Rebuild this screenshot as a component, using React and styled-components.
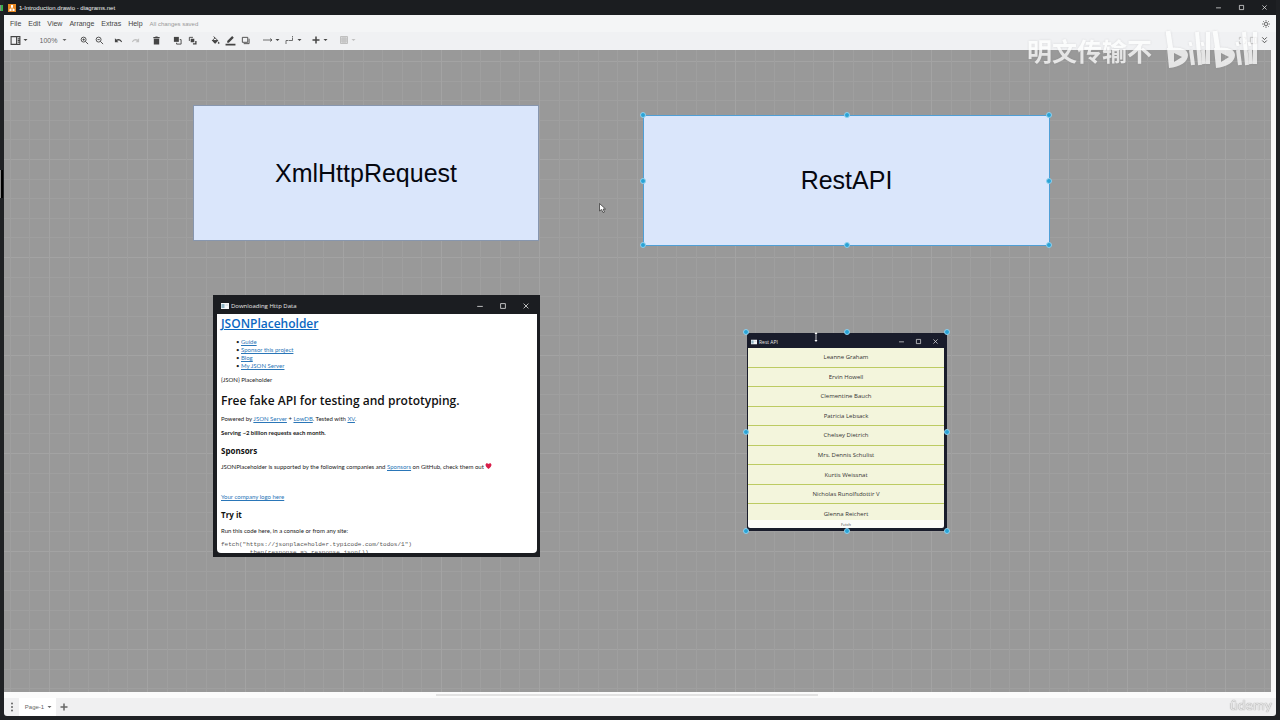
import styled, { createGlobalStyle, css } from "styled-components";

const menus = ["File", "Edit", "View", "Arrange", "Extras", "Help"];

const users = [
  "Leanne Graham",
  "Ervin Howell",
  "Clementine Bauch",
  "Patricia Lebsack",
  "Chelsey Dietrich",
  "Mrs. Dennis Schulist",
  "Kurtis Weissnat",
  "Nicholas Runolfsdottir V",
  "Glenna Reichert",
];

const handles = ["nw", "n", "ne", "w", "e", "sw", "s", "se"];

const Icon = ({ size = 10, children, ...rest }) => (
  <svg
    width={size}
    height={size}
    viewBox="0 0 20 20"
    fill="none"
    stroke="currentColor"
    strokeWidth={2}
    aria-hidden="true"
    {...rest}
  >
    {children}
  </svg>
);

const Caret = () => (
  <svg width="5" height="4" viewBox="0 0 10 8" fill="currentColor" aria-hidden="true">
    <path d="M1 2h8L5 6z" />
  </svg>
);

const WindowIcon = ({ width = 8 }) => (
  <svg width={width} height="6" viewBox="0 0 16 12" aria-hidden="true">
    <path fill="#f4f6f8" d="M0 0h16v12H0z" />
    <path fill="#8fb4c4" d="M1 2h6v8H1z" />
    <path fill="#c9d3d9" d="M9 3h5v2H9z" />
  </svg>
);

const WindowButtons = ({ size }) => (
  <>
    <button aria-label="Minimize">
      <Icon size={size}>
        <path d="M3 11h14" />
      </Icon>
    </button>
    <button aria-label="Maximize">
      <Icon size={size}>
        <path d="M4 4h12v12H4z" />
      </Icon>
    </button>
    <button aria-label="Close">
      <Icon size={size}>
        <path d="M4 4l12 12M16 4L4 16" />
      </Icon>
    </button>
  </>
);

const Handles = () => handles.map((h) => <Handle key={h} $at={h} />);

const Toolbar = () => (
  <ToolRow>
    <Tool $wide aria-label="View">
      <Icon size={11}>
        <path d="M2 3h16v14H2zM12 3v14M14 7h3M14 10h3M14 13h3" />
      </Icon>
      <Caret />
    </Tool>
    <Zoom $before={8}>
      <select aria-label="Zoom" defaultValue="100%">
        <option>100%</option>
      </select>
      <Caret />
    </Zoom>
    <Tool $before={8} aria-label="Zoom in">
      <Icon size={9}>
        <circle cx="8" cy="8" r="5.5" />
        <path d="M12 12l6 6M5.500 8h5M8 5.500v5" />
      </Icon>
    </Tool>
    <Tool aria-label="Zoom out">
      <Icon size={9}>
        <circle cx="8" cy="8" r="5.5" />
        <path d="M12 12l6 6M5.500 8h5" />
      </Icon>
    </Tool>
    <Tool $before={4} aria-label="Undo">
      <Icon size={9}>
        <path fill="currentColor" stroke="none" d="M2 5v9h8L7 11c3-2 7-1 9 3l2-1C16 6 9 5 5 8z" />
      </Icon>
    </Tool>
    <Tool $before={2} disabled aria-label="Redo">
      <Icon size={9}>
        <path fill="currentColor" stroke="none" d="M18 5v9h-8l3-3c-3-2-7-1-9 3l-2-1C4 6 11 5 15 8z" />
      </Icon>
    </Tool>
    <Tool $before={6} aria-label="Delete">
      <Icon size={9}>
        <path fill="currentColor" stroke="none" d="M4 6h12v13H4zM3 2h4l1-1h4l1 1h4v3H3z" />
      </Icon>
    </Tool>
    <Tool $before={6} aria-label="To front">
      <Icon size={9}>
        <path fill="currentColor" stroke="none" d="M2 2h11v11H2z" />
        <path d="M15 8h3v10H8v-3" />
      </Icon>
    </Tool>
    <Tool aria-label="To back">
      <Icon size={9}>
        <path d="M3 11V3h8" />
        <path fill="currentColor" stroke="none" d="M6 6h8v8H6zM16 11h3v8h-8v-3h5z" />
      </Icon>
    </Tool>
    <Tool $before={8} aria-label="Fill color">
      <Icon size={9}>
        <path d="M6 1l3 4M9 4l6 6-6 6-6-6z" />
        <path fill="currentColor" d="M3 10h12l-6 6z" />
        <path fill="currentColor" stroke="none" d="M17 12c3 4 2 5 0 5s-3-1 0-5z" />
      </Icon>
    </Tool>
    <Tool aria-label="Line color">
      <Icon size={11}>
        <path fill="currentColor" stroke="none" d="M4 11L13 2l3 3-9 9H4zM1 16h18v3H1z" />
      </Icon>
    </Tool>
    <Tool aria-label="Shadow">
      <Icon size={9}>
        <path d="M3 3h12v11H3z" />
        <path d="M6 17h12V6" />
      </Icon>
    </Tool>
    <Tool $wide $before={8} aria-label="Connection">
      <Icon>
        <path d="M0 10h18M14 7l4 3-4 3" strokeWidth="1.5" />
      </Icon>
      <Caret />
    </Tool>
    <Tool $wide $before={2} aria-label="Waypoints">
      <Icon>
        <path d="M2 18v-7h13V2" strokeDasharray="12 1" strokeWidth="1.5" />
      </Icon>
      <Caret />
    </Tool>
    <Tool $wide $before={6} aria-label="Insert">
      <Icon strokeWidth={3}>
        <path d="M10 3v14M3 10h14" />
      </Icon>
      <Caret />
    </Tool>
    <Tool $wide $before={8} disabled aria-label="Table">
      <Icon>
        <path fill="currentColor" fillOpacity=".5" d="M3 3h14v14H3zM3 8h14M3 12h14M8 3v14M12 3v14" />
      </Icon>
      <Caret />
    </Tool>
    <RightTools>
      <Tool $narrow disabled aria-label="Fullscreen">
        <Icon size={9}>
          <path d="M3 8V3h4M3 12v5h4M13 3h4v5M17 12v5h-4" />
        </Icon>
      </Tool>
      <Tool $narrow disabled aria-label="Format">
        <Icon size={9}>
          <path d="M3 3h14v14H3zM12 3v14" />
        </Icon>
      </Tool>
      <Tool $narrow aria-label="Collapse">
        <Icon size={9}>
          <path d="M5 3l5 5 5-5M5 10l5 5 5-5" />
        </Icon>
      </Tool>
    </RightTools>
  </ToolRow>
);

const HttpWindow = () => (
  <HttpFrame>
    <HttpTitle>
      <WindowIcon />
      <span>Downloading Http Data</span>
      <WindowButtons size={8} />
    </HttpTitle>
    <HttpPage>
      <h1>
        <a href="#home">JSONPlaceholder</a>
      </h1>
      <ul>
        <li><a href="#guide">Guide</a></li>
        <li><a href="#sponsor">Sponsor this project</a></li>
        <li><a href="#blog">Blog</a></li>
        <li><a href="#server">My JSON Server</a></li>
      </ul>
      <p>{"{JSON} Placeholder"}</p>
      <h2>Free fake API for testing and prototyping.</h2>
      <p>
        Powered by <a href="#json-server">JSON Server</a> + <a href="#lowdb">LowDB</a>. Tested
        with <a href="#xv">XV</a>.
      </p>
      <p>
        <b>Serving ~2 billion requests each month.</b>
      </p>
      <h3>Sponsors</h3>
      <p>
        JSONPlaceholder is supported by the following companies and{" "}
        <a href="#sponsors">Sponsors</a> on GitHub, check them out{" "}
        <svg width="7" height="6" viewBox="0 0 14 12" aria-hidden="true">
          <path fill="#d81e4a" d="M7 12C-4 4 3-3 7 2c4-5 11 2 0 10z" />
        </svg>
      </p>
      <Logos>
        <a href="#logo">Your company logo here</a>
      </Logos>
      <h3>Try it</h3>
      <p>Run this code here, in a console or from any site:</p>
      <pre>
        {`fetch("https://jsonplaceholder.typicode.com/todos/1")
       .then(response => response.json())`}
      </pre>
    </HttpPage>
  </HttpFrame>
);

const RestWindow = () => (
  <RestFrame>
    <RestTitle>
      <WindowIcon width={6} />
      <span>Rest API</span>
      <WindowButtons size={7} />
    </RestTitle>
    <RestBody>
      <UserList>
        {users.map((name) => (
          <li key={name}>{name}</li>
        ))}
      </UserList>
    </RestBody>
    <FetchButton>Fetch</FetchButton>
    <Handles />
    <ResizeCursor width="6" height="10" viewBox="0 0 12 20" aria-hidden="true">
      <path stroke="#fff" strokeWidth="1.5" d="M6 2v16" />
      <path fill="#fff" d="M3 4l3-4 3 4zM3 16l3 4 3-4z" />
    </ResizeCursor>
  </RestFrame>
);

const BiliLogo = () => (
  <svg width="92" height="44" viewBox="0 0 92 44" fill="none" stroke="#fff" aria-hidden="true">
    {[0, 47].map((x) => (
      <g key={x} transform={`translate(${x} 0)`}>
        <path strokeWidth="5" d="M2 5l3 20" />
        <path
          fill="#fff"
          stroke="none"
          fillRule="evenodd"
          d="M1 22c13-2 21 1 21 7 0 7-8 12-19 13zM8 27v9l8-5z"
        />
        <path strokeWidth="4" d="M25 24l2 15M31 6l3 33M37 24l1 14M42 6v32" />
        <path strokeWidth="3" d="M24 16l1 4M36 16l1 4" />
      </g>
    ))}
  </svg>
);

export default function App() {
  return (
    <>
      <GlobalStyle />
      <Shell>
        <TitleBar>
          <svg width="8" height="8" viewBox="0 0 16 16" aria-hidden="true">
            <path fill="#e98a24" d="M0 0h16v16H0z" />
            <path stroke="#fff" strokeWidth="1.5" d="M8 5L5 11M8 5l3 6" />
            <path fill="#fff" d="M6 2h4v4H6zM3 10h4v4H3zM9 10h4v4H9z" />
          </svg>
          <span>1-Introduction.drawio - diagrams.net</span>
          <WindowButtons size={7} />
        </TitleBar>
        <MenuBar>
          {menus.map((m) => (
            <button key={m}>{m}</button>
          ))}
          <Status>All changes saved</Status>
          <Theme aria-label="Appearance">
            <Icon size={8}>
              <circle cx="10" cy="10" r="4" />
              <path d="M10 0v4M10 16v4M0 10h4M16 10h4M3 3l3 3M14 14l3 3M3 17l3-3M14 6l3-3" />
            </Icon>
          </Theme>
        </MenuBar>
        <Toolbar />
        <Canvas>
          <XmlNode>XmlHttpRequest</XmlNode>
          <RestNode>
            RestAPI
            <Handles />
          </RestNode>
          <HttpWindow />
          <RestWindow />
          <Pointer width="7" height="10" viewBox="0 0 14 20" aria-hidden="true">
            <path fill="#fff" stroke="#333" strokeWidth="1.5" d="M1 1v15l4-3 3 6 3-1-3-6h5z" />
          </Pointer>
        </Canvas>
        <ScrollTrack>
          <div />
        </ScrollTrack>
        <PageBar>
          <button aria-label="Pages">
            <Icon stroke="none" fill="currentColor">
              <circle cx="10" cy="3" r="2" />
              <circle cx="10" cy="10" r="2" />
              <circle cx="10" cy="17" r="2" />
            </Icon>
          </button>
          <PageTab>
            Page-1 <Caret />
          </PageTab>
          <button aria-label="Insert page">
            <Icon strokeWidth={3}>
              <path d="M10 3v14M3 10h14" />
            </Icon>
          </button>
        </PageBar>
      </Shell>
      <Watermark>
        <span>明文传输不</span>
        <BiliLogo />
      </Watermark>
      <Udemy>ûdemy</Udemy>
      <EdgeMark $top={5} $height={6} $color="#35b04a" />
      <EdgeMark $top={170} $height={28} $color="#000" />
    </>
  );
}

const ui = `"Liberation Sans", Arial, sans-serif`;
const segoe = `"Open Sans", "Segoe UI", sans-serif`;

const GlobalStyle = createGlobalStyle`
  * {
    box-sizing: border-box;
  }
  body {
    margin: 0;
    background: #1f2124;
    font-family: ${ui};
    overflow: hidden;
  }
  button {
    display: flex;
    align-items: center;
    justify-content: center;
    padding: 0;
    border: none;
    background: none;
    color: inherit;
    font: inherit;
  }
  svg {
    flex-shrink: 0;
  }
`;

const Shell = styled.div`
  height: 100vh;
  display: flex;
  flex-direction: column;
  padding: 0 4px 4px;
`;

const TitleBar = styled.header`
  height: 15px;
  display: flex;
  align-items: center;
  padding-left: 4px;
  color: #f0f0f0;
  font-size: 6px;
  background: #1b1d20;
  span {
    flex: 1;
    padding-left: 3px;
  }
  button {
    width: 23px;
  }
`;

const MenuBar = styled.nav`
  height: 17px;
  display: flex;
  align-items: center;
  gap: 7px;
  padding: 0 6px;
  background: #f4f5f6;
  color: #444;
  font-size: 7px;
`;

const Status = styled.span`
  flex: 1;
  color: #999;
  font-size: 6px;
`;

const Theme = styled.button`
  color: #555;
`;

const ToolRow = styled.div`
  height: 18px;
  display: flex;
  align-items: center;
  padding: 0 6px 2px 5px;
  background: #f0f1f3;
  color: #444;
`;

const Tool = styled.button`
  width: ${(props) => (props.$wide ? 20 : props.$narrow ? 11 : 15)}px;
  height: 16px;
  gap: 2px;
  margin-left: ${(props) => props.$before || 0}px;
  color: ${(props) => (props.disabled ? "#c0c0c0" : "#444")};
`;

const Zoom = styled.div`
  width: 32px;
  display: flex;
  align-items: center;
  justify-content: center;
  gap: 2px;
  margin-left: ${(props) => props.$before}px;
  color: #666;
  select {
    width: 20px;
    appearance: none;
    padding: 0;
    border: none;
    background: none;
    color: inherit;
    font-family: ${ui};
    font-size: 7px;
  }
`;

const RightTools = styled.div`
  margin-left: auto;
  display: flex;
`;

// Five grid cells per tile, brightest line on the tile edge
const gridLines = (dir) =>
  `linear-gradient(${dir}, #a3a3a3 1px, transparent 1px 20px, #9f9f9f 20px 21px, transparent 21px 39px, #9f9f9f 39px 40px, transparent 40px 59px, #9f9f9f 59px 60px, transparent 60px 78px, #9f9f9f 78px 79px, transparent 79px)`;

const Canvas = styled.main`
  flex: 1;
  position: relative;
  overflow: hidden;
  border-right: 5px solid #f8f8f8;
  background-color: #999;
  background-image: ${gridLines("90deg")}, ${gridLines("180deg")};
  background-size: 98px 98px;
  background-position: 45px 11px;
`;

const Node = styled.div`
  position: absolute;
  display: flex;
  align-items: center;
  justify-content: center;
  background: #dae6fb;
  border: 1px solid #8796ae;
  color: #05070f;
  font-size: 25px;
`;

const XmlNode = styled(Node)`
  left: 189px;
  top: 55px;
  width: 346px;
  height: 136px;
`;

const RestNode = styled(Node)`
  left: 639px;
  top: 65px;
  width: 407px;
  height: 131px;
  && {
    border-color: #4f9fd6;
  }
`;

const Handle = styled.i`
  position: absolute;
  width: 6px;
  height: 6px;
  border: 1px solid #8fd0ee;
  border-radius: 50%;
  background: #29a3d6;
  ${({ $at }) => css`
    top: ${$at.includes("n") ? "-4px" : $at.includes("s") ? "calc(100% - 3px)" : "calc(50% - 3px)"};
    left: ${$at.includes("w") ? "-4px" : $at.includes("e") ? "calc(100% - 3px)" : "calc(50% - 3px)"};
  `}
`;

const HttpFrame = styled.section`
  position: absolute;
  left: 209px;
  top: 245px;
  width: 327px;
  height: 262px;
  display: flex;
  flex-direction: column;
  padding: 0 3px 4px 4px;
  background: #1b1d21;
  font-family: ${segoe};
`;

const HttpTitle = styled.header`
  height: 19px;
  flex-shrink: 0;
  display: flex;
  align-items: center;
  padding: 2px 0 0 4px;
  color: #e6e6e6;
  font-size: 6px;
  span {
    flex: 1;
    padding-left: 2px;
  }
  button {
    width: 23px;
  }
`;

const HttpPage = styled.div`
  flex: 1;
  min-height: 0;
  overflow: hidden;
  padding: 2px 4px 0;
  border-radius: 0 0 4px 4px;
  background: #fff;
  color: #222;
  font-family: Lato, sans-serif;
  font-size: 6px;
  line-height: 8px;
  white-space: nowrap;
  a {
    color: #2a76b8;
  }
  h1,
  h2,
  h3 {
    margin: 0;
    font-family: ${segoe};
    font-size: 12px;
    font-weight: 600;
    line-height: 16px;
    color: #111;
  }
  h1 a {
    color: #0b67c2;
  }
  h2 {
    margin-top: 9px;
  }
  h3 {
    margin-top: 8px;
    font-size: 8px;
    font-weight: 700;
    line-height: 12px;
  }
  ul {
    margin: 6px 0 0;
    padding-left: 20px;
  }
  li::marker {
    content: "• ";
  }
  p,
  pre {
    margin: 6px 0 0;
  }
  pre {
    font-family: "Liberation Mono", monospace;
    color: #555;
  }
`;

const Logos = styled.p`
  && {
    margin-top: 22px;
  }
`;

const RestFrame = styled.section`
  position: absolute;
  left: 743px;
  top: 283px;
  width: 200px;
  height: 198px;
  display: flex;
  flex-direction: column;
  padding: 0 3px 3px 1px;
  border-radius: 2px;
  background: #191c2b;
  font-family: ${segoe};
`;

const RestTitle = styled.header`
  height: 15px;
  flex-shrink: 0;
  display: flex;
  align-items: center;
  padding: 2px 0 0 3px;
  color: #e6e6e6;
  font-size: 5px;
  span {
    flex: 1;
    padding-left: 2px;
  }
  button {
    width: 17px;
  }
`;

const RestBody = styled.div`
  flex: 1;
  min-height: 0;
  overflow: hidden;
  background: #f3f5dc;
`;

const UserList = styled.ul`
  height: 176px;
  margin: 0;
  padding: 0;
  display: grid;
  grid-auto-rows: 1fr;
  list-style: none;
  color: #333;
  font-size: 6px;
  li {
    display: flex;
    align-items: center;
    justify-content: center;
    border-bottom: 1px solid #bccb62;
  }
`;

const FetchButton = styled.button`
  height: 8px;
  flex-shrink: 0;
  border-radius: 0 0 2px 2px;
  && {
    background: #fbfbf8;
    color: #444;
    font-size: 4px;
  }
`;

const ResizeCursor = styled.svg`
  position: absolute;
  left: 66px;
  top: -1px;
`;

const Pointer = styled.svg`
  position: absolute;
  left: 595px;
  top: 153px;
`;

const ScrollTrack = styled.div`
  height: 6px;
  padding: 2px 36% 0 34%;
  background: #fbfbfb;
  div {
    height: 2px;
    background: #e2e2e2;
  }
`;

const PageBar = styled.footer`
  height: 18px;
  display: flex;
  align-items: center;
  background: #f0f0f1;
  border-radius: 0 0 3px 3px;
  color: #666;
  button {
    width: 15px;
  }
`;

const PageTab = styled.button`
  && {
    width: 37px;
    height: 18px;
    gap: 3px;
    padding-left: 2px;
    background: #fff;
    font-size: 6px;
  }
`;

const Watermark = styled.div`
  position: fixed;
  top: 24px;
  right: 22px;
  display: flex;
  align-items: center;
  gap: 14px;
  color: #fff;
  font-family: "Noto Sans CJK SC", sans-serif;
  font-size: 25px;
  font-weight: 700;
  line-height: 44px;
  opacity: 0.75;
  pointer-events: none;
  filter: drop-shadow(0 0 1px rgba(90, 90, 90, 0.2));
  span {
    padding-top: 4px;
  }
`;

const Udemy = styled.div`
  position: fixed;
  right: 8px;
  bottom: 6px;
  color: #e4e4e4;
  font-family: Lato, sans-serif;
  font-size: 14px;
  font-weight: 700;
  line-height: 18px;
  text-shadow: 0 0 1px #777;
`;

const EdgeMark = styled.div`
  position: fixed;
  left: 0;
  top: ${(props) => props.$top}px;
  width: 3px;
  height: ${(props) => props.$height}px;
  border-left: 1px solid #888;
  background: ${(props) => props.$color};
`;
